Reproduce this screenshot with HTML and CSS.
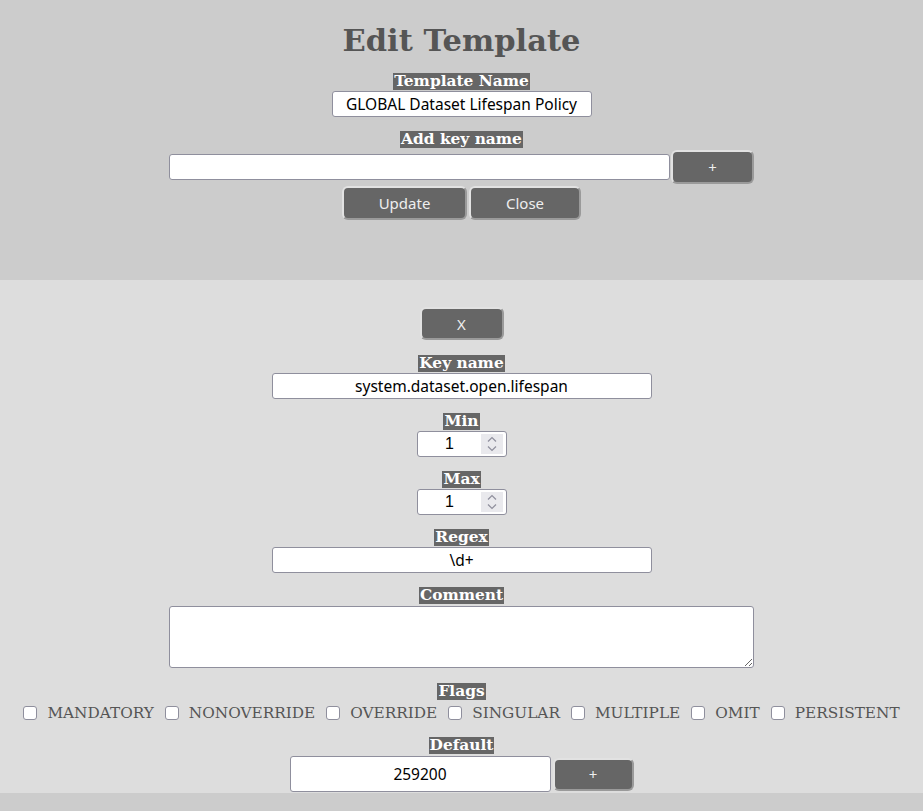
FILE: index.html
```html
<!DOCTYPE html>
<html>
<head>
<meta charset="utf-8">
<title>Edit Template</title>
<link rel="stylesheet" href="styles.css">
</head>
<body>
<section class="top">
  <h1 class="title">Edit Template</h1>
  <div class="field first">
    <span class="label">Template Name</span>
    <input class="text w260" type="text" value="GLOBAL Dataset Lifespan Policy">
  </div>
  <div class="field">
    <span class="label">Add key name</span>
    <div class="row tight">
      <input class="text w501" type="text" value="">
      <button class="btn plus">+</button>
    </div>
  </div>
  <div class="row actions">
    <button class="btn update">Update</button>
    <button class="btn close">Close</button>
  </div>
</section>
<section class="key">
  <button class="btn x">X</button>
  <div class="field first">
    <span class="label">Key name</span>
    <input class="text w380" type="text" value="system.dataset.open.lifespan">
  </div>
  <div class="field">
    <span class="label">Min</span>
    <div class="numwrap">
      <input class="text num" type="text" value="1">
      <span class="spin"><svg width="22" height="20" viewBox="0 0 22 20"><path d="M7 7.5 L11 3.5 L15 7.5" fill="none" stroke="#8f8f9d" stroke-width="1.2"/><path d="M7 12.5 L11 16.5 L15 12.5" fill="none" stroke="#8f8f9d" stroke-width="1.2"/></svg></span>
    </div>
  </div>
  <div class="field">
    <span class="label">Max</span>
    <div class="numwrap">
      <input class="text num" type="text" value="1">
      <span class="spin"><svg width="22" height="20" viewBox="0 0 22 20"><path d="M7 7.5 L11 3.5 L15 7.5" fill="none" stroke="#8f8f9d" stroke-width="1.2"/><path d="M7 12.5 L11 16.5 L15 12.5" fill="none" stroke="#8f8f9d" stroke-width="1.2"/></svg></span>
    </div>
  </div>
  <div class="field">
    <span class="label">Regex</span>
    <input class="text w380" type="text" value="\d+">
  </div>
  <div class="field">
    <span class="label">Comment</span>
    <textarea class="comment"></textarea>
  </div>
  <div class="field flags-field">
    <span class="label">Flags</span>
    <div class="flags">
      <label class="flag"><input type="checkbox"><span>MANDATORY</span></label>
      <label class="flag"><input type="checkbox"><span>NONOVERRIDE</span></label>
      <label class="flag"><input type="checkbox"><span>OVERRIDE</span></label>
      <label class="flag"><input type="checkbox"><span>SINGULAR</span></label>
      <label class="flag"><input type="checkbox"><span>MULTIPLE</span></label>
      <label class="flag"><input type="checkbox"><span>OMIT</span></label>
      <label class="flag"><input type="checkbox"><span>PERSISTENT</span></label>
    </div>
  </div>
  <div class="field default-field">
    <span class="label">Default</span>
    <div class="row">
      <input class="text default" type="text" value="259200">
      <button class="btn plus small">+</button>
    </div>
  </div>
</section>
</body>
</html>
```
FILE: styles.css
```css
html, body {
  margin: 0;
  padding: 0;
}
body {
  background: #cccccc;
  font-family: "DejaVu Serif", serif;
  color: #555555;
}
.top {
  background: #cccccc;
  display: flex;
  flex-direction: column;
  align-items: center;
  padding: 22px 0 60px;
}
.title {
  margin: 0;
  font-size: 30.5px;
  line-height: 36px;
  font-weight: bold;
  color: #555555;
}
.field {
  display: flex;
  flex-direction: column;
  align-items: center;
  margin-top: 14px;
}
.top .field.first {
  margin-top: 15px;
}
.label {
  display: inline-block;
  background: #666666;
  color: #ffffff;
  font-weight: bold;
  font-size: 15.4px;
  line-height: 17px;
  padding: 0 1px;
  margin-bottom: 1px;
}
.text {
  box-sizing: border-box;
  height: 26px;
  border: 1px solid #8f8f9d;
  border-radius: 3px;
  background: #ffffff;
  font-family: "Noto Sans", sans-serif;
  font-size: 15.5px;
  color: #000000;
  text-align: center;
  padding: 0 2px;
  margin: 0;
}
.w260 { width: 260px; }
.w380 { width: 380px; }
.w501 { width: 501px; text-align: left; }
.numwrap {
  position: relative;
  width: 90px;
  height: 26px;
}
.num {
  width: 90px;
  font-family: "Liberation Sans", sans-serif;
  font-size: 16px;
  padding: 0 26px 0 2px;
}
.spin {
  position: absolute;
  right: 4px;
  top: 3px;
  width: 22px;
  height: 20px;
  background: #e9e9ed;
  display: block;
}
.spin svg {
  display: block;
}
.row {
  display: flex;
  align-items: center;
  gap: 2px;
}
.row.tight {
  gap: 1px;
}
.field .row {
  margin-top: 1px;
}
.actions {
  margin-top: 2px;
}
.btn {
  box-sizing: border-box;
  height: 34px;
  background: #666666;
  color: #eeeeee;
  font-family: "Noto Sans", sans-serif;
  font-size: 15px;
  border-style: solid;
  border-width: 2px;
  border-color: #e2e2e2 #9a9a9a #9a9a9a #e2e2e2;
  border-radius: 6px;
  padding: 0 10px;
  margin: 0;
  cursor: pointer;
}
.plus { width: 83px; }
.update { width: 125px; }
.close { width: 112px; }
.key {
  background: #dddddd;
  display: flex;
  flex-direction: column;
  align-items: center;
  padding: 27px 0 1px;
}
.x {
  width: 84px;
  height: 33px;
}
.key .field.first {
  margin-top: 15px;
}
.comment {
  box-sizing: border-box;
  width: 585px;
  height: 62px;
  border: 1px solid #8f8f9d;
  border-radius: 3px;
  background: #ffffff;
  margin: 1px 0 0;
  font-family: "Noto Sans", sans-serif;
}
.flags-field {
  margin-top: 15px;
}
.flags {
  display: flex;
  align-items: center;
  gap: 11px;
  margin-top: 2px;
  height: 20px;
}
.flag {
  display: inline-flex;
  align-items: center;
  gap: 10px;
  font-size: 15.3px;
  color: #555555;
}
.flag input {
  appearance: none;
  -webkit-appearance: none;
  box-sizing: border-box;
  margin: 0;
  width: 14px;
  height: 14px;
  border: 1.5px solid #8f8f9d;
  border-radius: 3px;
  background: #ffffff;
}
.default-field {
  margin-top: 14px;
}
.default {
  width: 261px;
  height: 36px;
}
.small {
  width: 81px;
  height: 33px;
}
```
